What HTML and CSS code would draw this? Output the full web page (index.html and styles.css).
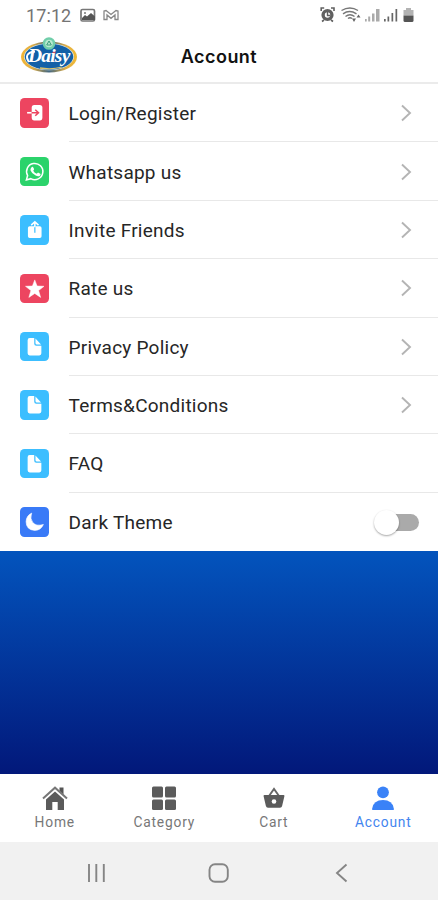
FILE: index.html
```html
<!DOCTYPE html>
<html lang="en">
<head>
<meta charset="utf-8">
<title>Account</title>
<link rel="stylesheet" href="styles.css">
</head>
<body>
<svg class="defs" width="0" height="0" aria-hidden="true">
  <symbol id="chevron" viewBox="0 0 12 18"><path d="M2 1.500l8 7.500-8 7.500" fill="none" stroke="#b4b4b4" stroke-width="1.900"/></symbol>
  <symbol id="doc" viewBox="0 0 29 29"><path d="M9.500 6H14v5.500q0 2 2 2h5V21q0 2-2 2h-9.500Q7.500 23 7.500 21V8Q7.500 6 9.500 6z" fill="#fff"/><path d="M15.200 6.500l5.500 5.800h-4q-1.500 0-1.500-1.500z" fill="#fff"/></symbol>
</svg>
<div class="screen">
  <div class="status">
    <span class="time">17:12</span>
    <svg class="st-left" width="42" height="18" viewBox="0 0 42 18">
      <rect x="1" y="3.500" width="13.500" height="11.500" rx="1.500" fill="#fff" stroke="#777" stroke-width="1.700"/>
      <circle cx="5" cy="7" r="1" fill="#777"/><path d="M2 14v-2l3-3 2 1.500 4-3.500 4 3.500V14z" fill="#555"/>
      <path d="M24 5v8.500h3V9l4 3.300L35 9v4.500h3V5l-2-.5-5 4-5-4z" fill="none" stroke="#888" stroke-width="1.300"/>
    </svg>
    <svg class="st-right" width="96" height="18" viewBox="0 0 96 18">
      <g fill="none" stroke="#606060"><circle cx="7.500" cy="9" r="4.400" fill="#fff" stroke-width="3.400"/><path d="M7.500 6v3.500H10" stroke-width="1.400"/><path d="M1.200 5V2h3M11 2h3v3M2 15.500l2-1.500M13 15.500L11 14" stroke-width="1.600"/></g>
      <g fill="none" stroke="#777" stroke-width="1.400"><path d="M21.500 4.500q8.500-5 16.500 0M23 7.800q6.500-4.500 13.500 0M25.500 10.500q4.500-3.500 9 0M28 12.500q2-1.500 4 0"/></g>
      <path d="M32 12.500h4L34 16zM36.500 11.500l2-3 2 3z" fill="#666"/>
      <g fill="#aaa"><rect x="45" y="13" width="1.700" height="2.500"/><rect x="48.200" y="10.500" width="2" height="5"/><rect x="52" y="7.500" width="2.500" height="8"/><rect x="56" y="3" width="3.500" height="12.500"/></g>
      <g fill="#666"><rect x="64" y="13" width="1.700" height="2.500"/><rect x="67.500" y="10.500" width="1.700" height="5"/><rect x="71.500" y="7" width="1.700" height="8.500"/><rect x="75.500" y="3" width="1.700" height="12.500"/></g>
      <path d="M86 2h5v2h2.500v5.500h-10V4H86z" fill="#b3b3b3"/><path d="M83.500 9.500h10v5q0 1.500-1.500 1.500h-7q-1.500 0-1.500-1.500z" fill="#555"/>
    </svg>
  </div>
  <header class="header">
    <div class="logo">
      <svg width="58" height="38" viewBox="0 0 58 38">
        <defs><linearGradient id="gold" x1="0" x2="1"><stop offset="0" stop-color="#f2b636"/><stop offset=".2" stop-color="#e0ae45"/><stop offset=".5" stop-color="#426781"/><stop offset=".8" stop-color="#e0ae45"/><stop offset="1" stop-color="#f1ba35"/></linearGradient></defs>
        <ellipse cx="29" cy="20" rx="28" ry="15.500" fill="url(#gold)"/>
        <ellipse cx="29" cy="19.700" rx="25" ry="13.500" fill="#ddecf4"/>
        <ellipse cx="29" cy="19.700" rx="24.300" ry="13" fill="#1260a7"/>
        <path d="M20 31q12 2 22-1" fill="none" stroke="#d9c36f" stroke-width="1.300"/>
        <circle cx="29" cy="6.500" r="6.300" fill="#70ceaa"/><circle cx="29" cy="6.500" r="3.800" fill="#b9ead0"/><path d="M29 4l2.300 4h-4.600z" fill="none" stroke="#389c7c"/>
        <path d="M9 25q-6-9 6-10.500" fill="none" stroke="#fff" stroke-width="2"/>
        <circle cx="34" cy="15.500" r="1.500" fill="#d64b62"/>
      </svg>
      <span class="brand">Daisy</span>
    </div>
    <h1>Account</h1>
  </header>
  <main class="list">
    <div class="row"><span class="tile red"><svg viewBox="0 0 29 29"><rect x="11.500" y="7" width="10.500" height="15" rx="2.500" fill="#fff"/><path d="M7 14.500h4.500" stroke="#fff" stroke-width="1.600"/><path d="M11.500 14.500H18M15 11.500l3.200 3-3.200 3" fill="none" stroke="#ed4560" stroke-width="1.500"/></svg></span><div class="cell"><span class="label">Login/Register</span><svg class="chev"><use href="#chevron"/></svg></div></div>
    <div class="row"><span class="tile green"><svg viewBox="0 0 29 29"><path d="M6.300 22.500l1.200-4.300A8 8 0 1 1 10.600 21.300z" fill="none" stroke="#fff" stroke-width="1.500"/><path d="M11.200 10.200q1.300-1.400 2 .3l.6 1.400q.2.500-.8 1.600 1.300 2.300 3.500 3l1.200-1.200 2.200 1.100q.8.500-.1 1.700-1.500 1.600-4.400.2-3.700-1.800-5-5.100-.5-1.700.8-3z" fill="#fff"/></svg></span><div class="cell"><span class="label">Whatsapp us</span><svg class="chev"><use href="#chevron"/></svg></div></div>
    <div class="row"><span class="tile sky"><svg viewBox="0 0 29 29"><path d="M9.500 11H14v6.500h1.200V11h4.300q1.700 0 1.700 1.700v8.300q0 1.700-1.700 1.700h-10q-1.700 0-1.700-1.700v-8.300Q7.800 11 9.500 11z" fill="#fff"/><path d="M14.600 12V6.500M11 10l3.600-3.300L18.200 10" fill="none" stroke="#fff" stroke-width="1.500"/></svg></span><div class="cell"><span class="label">Invite Friends</span><svg class="chev"><use href="#chevron"/></svg></div></div>
    <div class="row"><span class="tile red"><svg viewBox="0 0 29 29"><path d="M14.500 5.800l2.300 6 6.800.3-5.300 4.200 2 6.700-5.800-3.900L8.700 23l2-6.700-5.300-4.200 6.800-.3z" fill="#fff" stroke="#fff" stroke-width=".5" stroke-linejoin="round"/></svg></span><div class="cell"><span class="label">Rate us</span><svg class="chev"><use href="#chevron"/></svg></div></div>
    <div class="row"><span class="tile sky"><svg viewBox="0 0 29 29"><use href="#doc"/></svg></span><div class="cell"><span class="label">Privacy Policy</span><svg class="chev"><use href="#chevron"/></svg></div></div>
    <div class="row"><span class="tile sky"><svg viewBox="0 0 29 29"><use href="#doc"/></svg></span><div class="cell"><span class="label">Terms&amp;Conditions</span><svg class="chev"><use href="#chevron"/></svg></div></div>
    <div class="row"><span class="tile sky"><svg viewBox="0 0 29 29"><use href="#doc"/></svg></span><div class="cell"><span class="label">FAQ</span></div></div>
    <div class="row"><span class="tile blue"><svg viewBox="0 0 29 29"><path d="M11.500 6Q9.500 11.500 12.500 15.200 16 19.300 23 17.200 20.500 23 14.500 23 6 22.500 6 14.500 6.200 8.500 11.500 6z" fill="#fff" stroke="#fff" stroke-width=".6" stroke-linejoin="round"/></svg></span><div class="cell"><span class="label">Dark Theme</span><span class="toggle"><span class="knob"></span></span></div></div>
  </main>
  <div class="backdrop"></div>
  <nav class="tabs">
    <div class="tab"><svg width="26" height="26" viewBox="0 0 26 26"><path d="M17.500 2.500h4V10l-4-4z" fill="#555"/><path d="M13 6.500l9 8V25h-6.300v-8h-5.400v8H4V14.500z" fill="#5b5b5b"/><path d="M1 13.500L13 2.700l12 10.800" fill="none" stroke="#777" stroke-width="2"/></svg><span>Home</span></div>
    <div class="tab"><svg width="26" height="26" viewBox="0 0 26 26" fill="#5b5b5b"><rect x="1" y="1.500" width="11" height="11" rx="1.500"/><rect x="14" y="1.500" width="11" height="11" rx="1.500"/><rect x="1" y="14.500" width="11" height="10.500" rx="1.500"/><rect x="14" y="14.500" width="11" height="10.500" rx="1.500"/></svg><span>Category</span></div>
    <div class="tab"><svg width="26" height="26" viewBox="0 0 26 26"><path d="M8 11l5-7 5 7" fill="none" stroke="#666" stroke-width="1.900"/><path d="M3.500 10h19q1.200 0 .9 1.200L21.100 21q-.4 1.700-2.100 1.700H7Q5.300 22.700 4.900 21L2.600 11.200Q2.300 10 3.500 10z" fill="#5b5b5b"/><circle cx="13" cy="16.500" r="2.300" fill="#fff"/></svg><span>Cart</span></div>
    <div class="tab active"><svg width="26" height="26" viewBox="0 0 26 26" fill="#3a82f7"><circle cx="13" cy="7.300" r="5.900"/><path d="M2.200 25v-1.500Q3.500 15 13 15t10.800 8.500V25z"/></svg><span>Account</span></div>
  </nav>
  <div class="sysnav">
    <svg width="24" height="24" viewBox="0 0 24 24"><path d="M5 3v18M12.300 3v18M19.800 3v18" stroke="#858585" stroke-width="1.900"/></svg>
    <svg width="24" height="24" viewBox="0 0 24 24"><rect x="2.500" y="3.200" width="18.300" height="17.600" rx="5.500" fill="none" stroke="#858585" stroke-width="1.900"/></svg>
    <svg width="24" height="24" viewBox="0 0 24 24"><path d="M16.500 3.500L7 12l9.500 8.500" fill="none" stroke="#858585" stroke-width="1.900"/></svg>
  </div>
</div>
</body>
</html>
```
FILE: styles.css
```css
* { box-sizing: border-box; }
body { margin: 0; background: #fff; font-family: Roboto, "Liberation Sans", sans-serif; }
svg { display: block; flex: none; }
.defs { position: absolute; }
.screen { width: 438px; height: 900px; display: flex; flex-direction: column; overflow: hidden; }

.status { height: 30px; display: flex; align-items: center; padding: 0 22px 0 26px; }
.time { font-size: 18px; color: #747474; width: 46px; white-space: nowrap; letter-spacing: .1px; }
.st-left { margin-left: 8px; margin-top: -1px; }
.st-right { margin-left: auto; }

.header { height: 54px; display: grid; grid-template-columns: 78px 1fr 78px; align-items: center; border-bottom: 2px solid #ebebeb; }
.header h1 { margin: 0; text-align: center; font-family: Inter, Roboto, sans-serif; font-size: 18px; font-weight: 600; letter-spacing: .45px; color: #111; }
.logo { position: relative; width: 58px; height: 38px; margin-left: 20px; }
.brand { position: absolute; left: 8px; top: 7px; font: italic bold 19.500px/24px "Liberation Serif", serif; letter-spacing: -.8px; color: #fff; }

.list { height: 467px; display: grid; grid-template-rows: repeat(8, 1fr); background: #fff; flex: none; }
.row { display: flex; align-items: stretch; padding-left: 19.500px; }
.tile { width: 29.500px; height: 29.500px; border-radius: 4.500px; align-self: center; flex: none; margin-right: 19.500px; }
.tile svg { width: 100%; height: 100%; }
.red { background: #ed4560; }
.green { background: #2bd36b; }
.sky { background: #3cbeff; }
.blue { background: #397af7; }
.cell { flex: 1; display: flex; align-items: center; justify-content: space-between; padding: 1px 26px 0 0; border-bottom: 1.500px solid #e8e8e8; }
.row:last-child .cell { border-bottom: 0; padding-right: 19px; }
.label { font-size: 19px; color: #262626; white-space: nowrap; letter-spacing: .24px; padding-top: 1px; }
.row:last-child .label { padding-top: 0; }
.chev { width: 12px; height: 18px; }
.toggle { position: relative; width: 37px; height: 17px; border-radius: 9px; background: #aaa; }
.knob { position: absolute; left: -8px; top: -4px; width: 25px; height: 25px; border-radius: 50%; background: #fff; box-shadow: 0 1px 2px rgba(0,0,0,.35); }

.backdrop { flex: 1; background: linear-gradient(#0354bd, #02187a); }

.tabs { height: 68px; display: grid; grid-template-columns: repeat(4, 1fr); background: #fff; flex: none; }
.tab { display: flex; flex-direction: column; align-items: center; padding-top: 11px; font-size: 13.800px; line-height: 18px; letter-spacing: .8px; color: #777; }
.tab span { margin-top: 2px; }
.tab.active { color: #4385ef; }

.sysnav { height: 58px; display: flex; justify-content: space-between; align-items: center; padding: 4px 84px 0; background: #f1f1f1; flex: none; }
```
